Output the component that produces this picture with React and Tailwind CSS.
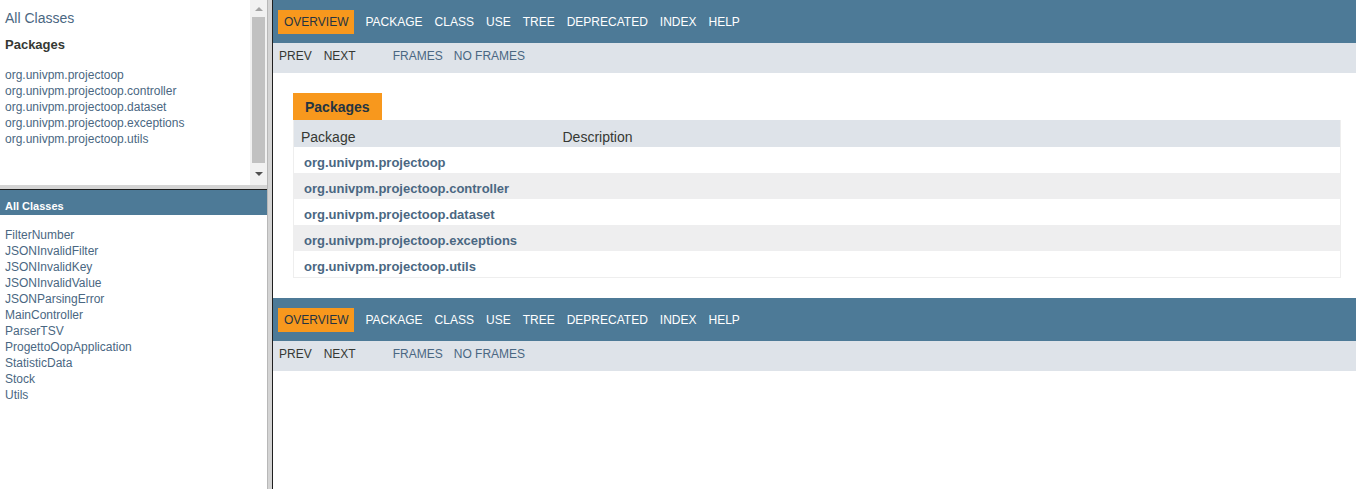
import React from 'react';

const packages = [
  'org.univpm.projectoop',
  'org.univpm.projectoop.controller',
  'org.univpm.projectoop.dataset',
  'org.univpm.projectoop.exceptions',
  'org.univpm.projectoop.utils',
];

const classes = [
  'FilterNumber',
  'JSONInvalidFilter',
  'JSONInvalidKey',
  'JSONInvalidValue',
  'JSONParsingError',
  'MainController',
  'ParserTSV',
  'ProgettoOopApplication',
  'StatisticData',
  'Stock',
  'Utils',
];

const navItems = ['Overview', 'Package', 'Class', 'Use', 'Tree', 'Deprecated', 'Index', 'Help'];

function TopNav() {
  return (
    <div className="bg-[#4d7a97] h-[43px] pt-[10px] pl-[5px] flex">
      {navItems.map((item, i) => (
        <span
          key={item}
          className={`uppercase text-[12px] leading-[14px] py-[5px] px-[6px] h-[24px] ${
            i === 0 ? 'bg-[#f8981d] text-[#253441] mr-[5px]' : 'text-white'
          }`}
        >
          {item}
        </span>
      ))}
    </div>
  );
}

function SubNav() {
  return (
    <div className="bg-[#dee3e9] h-[30px] pt-[6px] pl-[6px] flex text-[12px] leading-[14px]">
      <span className="text-[#353833]">PREV</span>
      <span className="ml-[12px] text-[#353833]">NEXT</span>
      <span className="ml-[37px] text-[#4a6782]">FRAMES</span>
      <span className="ml-[11px] text-[#4a6782]">NO FRAMES</span>
    </div>
  );
}

function Scrollbar() {
  return (
    <div className="w-[17px] h-full bg-[#f1f1f1] flex flex-col items-center">
      <div className="h-[17px] flex items-center justify-center">
        <div className="w-0 h-0 border-l-[4px] border-r-[4px] border-b-[4px] border-l-transparent border-r-transparent border-b-[#a3a3a3]" />
      </div>
      <div className="w-[13px] flex-1 bg-[#c1c1c1]" />
      <div className="h-[22px] flex items-center justify-center">
        <div className="w-0 h-0 border-l-[4px] border-r-[4px] border-t-[4px] border-l-transparent border-r-transparent border-t-[#505050]" />
      </div>
    </div>
  );
}

export default function App() {
  return (
    <div
      className="w-[1356px] h-[489px] flex overflow-hidden bg-white text-[#353833]"
      style={{ fontFamily: '"Liberation Sans", Arial, sans-serif' }}
    >
      {/* left frames */}
      <div className="w-[267px] flex flex-col">
        <div className="h-[185px] flex">
          <div className="flex-1 pl-[5px]">
            <div className="pt-[10px] text-[14px] leading-[16px] text-[#4a6782]">All Classes</div>
            <div className="mt-[11px] text-[13px] leading-[16px] font-bold text-[#353833]">Packages</div>
            <ul className="mt-[14px] text-[12px] leading-[16px] text-[#4a6782]">
              {packages.map((p) => (
                <li key={p}>{p}</li>
              ))}
            </ul>
          </div>
          <Scrollbar />
        </div>
        <div className="h-[4px] bg-[#d4d4d4]" />
        <div className="flex-1 border-t border-[#1f1f1f]">
          <div className="h-[25px] bg-[#4d7a97] pt-[10px] pl-[5px] text-[11px] leading-[13px] font-bold text-white">
            All Classes
          </div>
          <ul className="pt-[12px] pl-[5px] text-[12px] leading-[16px] text-[#4a6782]">
            {classes.map((c) => (
              <li key={c}>{c}</li>
            ))}
          </ul>
        </div>
      </div>

      {/* frame divider */}
      <div className="w-[5px] bg-[#d4d4d4] border-l border-[#b8b8b8]" />

      {/* right frame */}
      <div className="flex-1 border-l border-[#1f1f1f]">
        <TopNav />
        <SubNav />
        <div className="pt-[20px] pl-[20px] pr-[15px] pb-[20px]">
          <div className="inline-block bg-[#f8981d] text-[#253441] font-bold text-[14px] leading-[16px] pt-[6px] pb-[5px] px-[12px]">
            Packages
          </div>
          <div className="border-l border-r border-b border-[#eeeeee]">
            <div className="grid grid-cols-[25%_1fr] bg-[#dee3e9] h-[27px] text-[14px] leading-[16px] text-[#353833]">
              <div className="pt-[9px] pl-[7px]">Package</div>
              <div className="pt-[9px] pl-[7px]">Description</div>
            </div>
            {packages.map((p, i) => (
              <div
                key={p}
                className={`grid grid-cols-[25%_1fr] h-[26px] ${i % 2 === 1 ? 'bg-[#eeeeef]' : 'bg-white'}`}
              >
                <div className="pt-[9px] pl-[10px] text-[13px] leading-[14px] font-bold text-[#4a6782] whitespace-nowrap">
                  {p}
                </div>
                <div />
              </div>
            ))}
          </div>
        </div>
        <TopNav />
        <SubNav />
      </div>
    </div>
  );
}
